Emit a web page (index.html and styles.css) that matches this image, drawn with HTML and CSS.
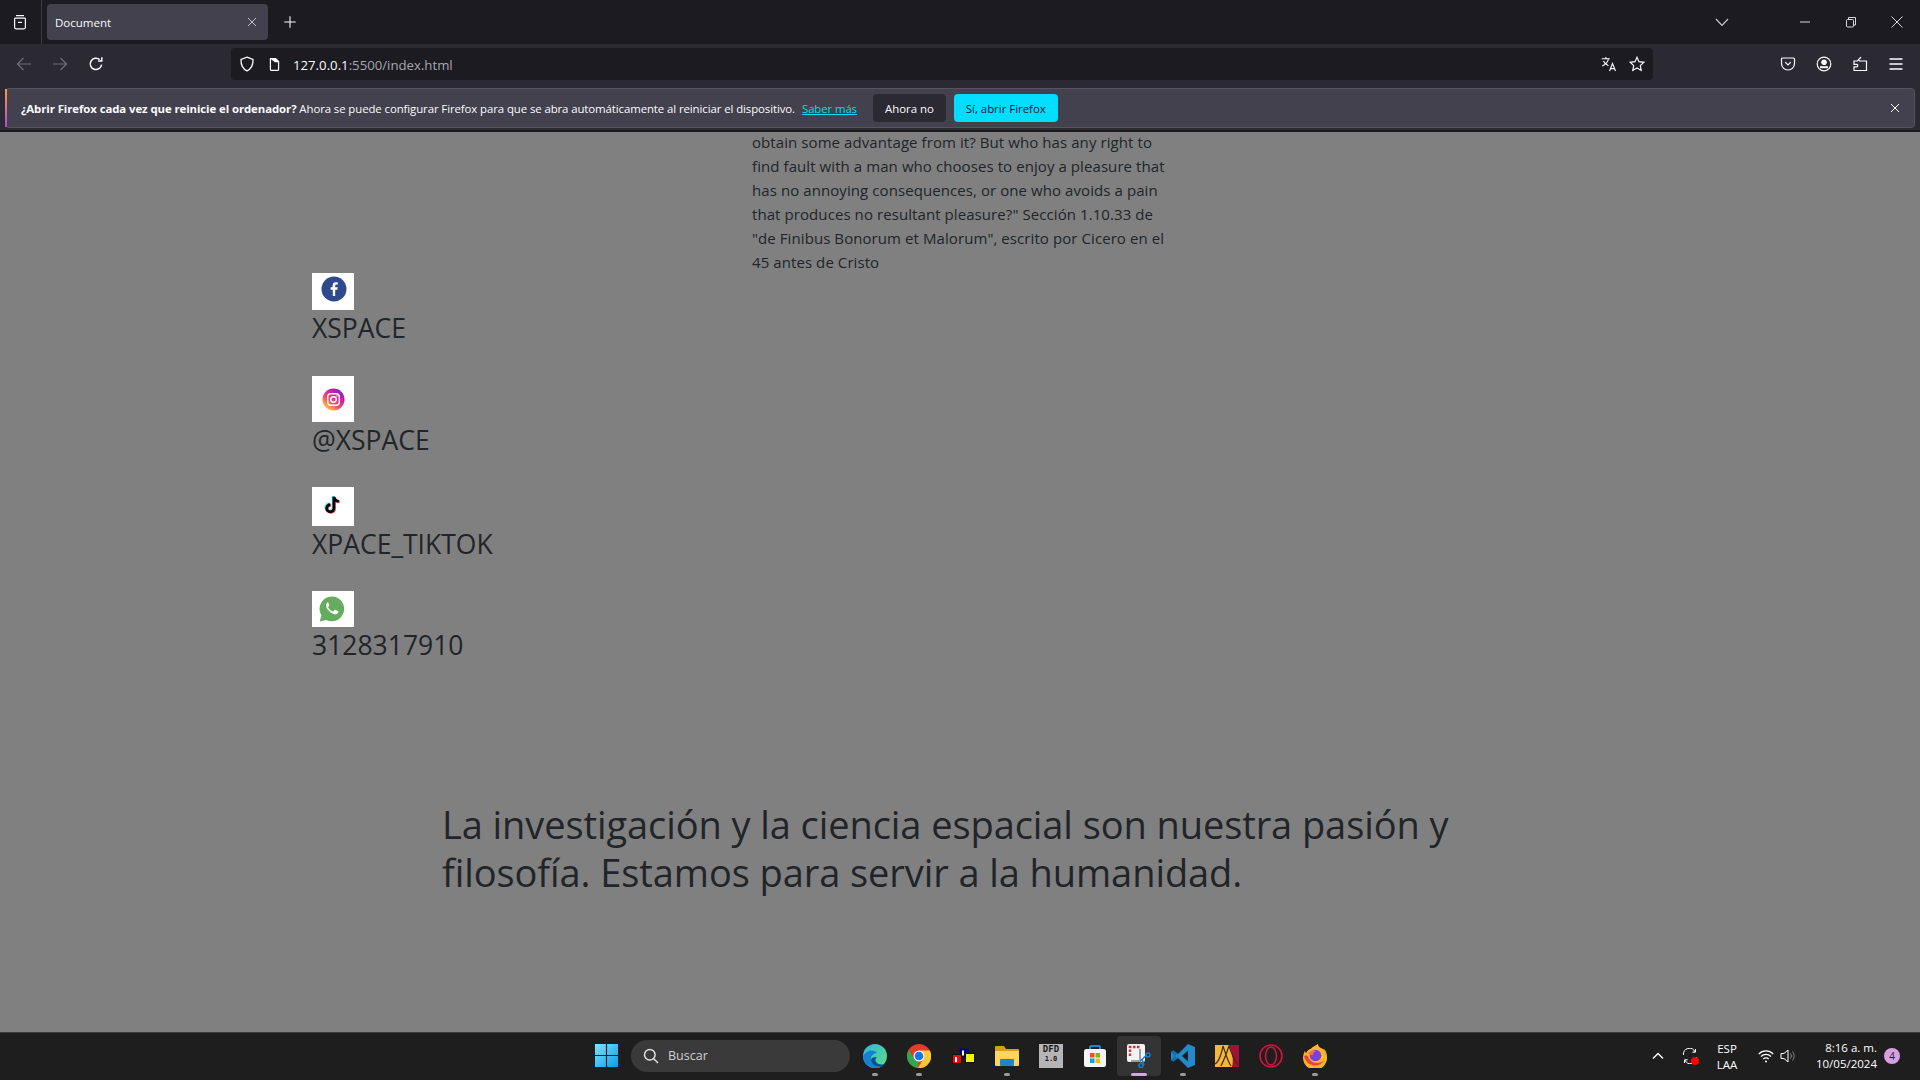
FILE: index.html
```html
<!DOCTYPE html>
<html lang="es">
<head>
  <meta charset="UTF-8">
  <title>Document</title>
  <link rel="stylesheet" href="styles.css">
</head>
<body>
  <div id="window">

    <!-- tabs -->
    <div class="tabstrip">
      <div class="side-btn">
        <svg class="ico" viewBox="0 0 16 16" fill="none" stroke="#fbfbfe" stroke-width="1.2"><path d="M4 1.6h8M2.6 4.2h10.8M2.6 4.2v9a1.6 1.6 0 0 0 1.6 1.6h7.6a1.6 1.6 0 0 0 1.6-1.6v-9"/><path d="M6 8.4h4"/></svg>
      </div>
      <div class="tab">
        <span class="tab-title">Document</span>
        <svg class="ico-s" viewBox="0 0 12 12" stroke="#c4c4c8" stroke-width="1"><path d="M2 2l8 8M10 2l-8 8"/></svg>
      </div>
      <svg class="ico new-tab" viewBox="0 0 16 16" stroke="#fbfbfe" stroke-width="1.2"><path d="M8 1.5v13M1.5 8h13"/></svg>
      <div class="tabstrip-right">
        <svg class="ico tab-list" viewBox="0 0 16 16" fill="none" stroke="#c9c9cd" stroke-width="1.2"><path d="M2 5l6 6.4L14 5"/></svg>
        <div class="win-btn"><svg class="ico-s" viewBox="0 0 12 12" stroke="#d8d8da" stroke-width="1"><path d="M1 6h10"/></svg></div>
        <div class="win-btn"><svg class="ico-s" viewBox="0 0 12 12" fill="none" stroke="#d8d8da" stroke-width="1"><rect x="1.5" y="3.5" width="7" height="7.5" rx="1"/><path d="M3.5 3.5V1.5h7v7.5H8.5"/></svg></div>
        <div class="win-btn"><svg class="ico-s" viewBox="0 0 12 12" stroke="#d8d8da" stroke-width="1"><path d="M.5.5l11 11M11.500.5l-11 11"/></svg></div>
      </div>
    </div>

    <!-- nav bar -->
    <div class="navbar">
      <svg class="ico nav-ico" viewBox="0 0 16 16" fill="none" stroke="#6f6f76" stroke-width="1.2"><path d="M15 8H1.500M7.500 2l-6 6 6 6"/></svg>
      <svg class="ico nav-ico" viewBox="0 0 16 16" fill="none" stroke="#6f6f76" stroke-width="1.2"><path d="M1 8h13.500M8.500 2l6 6-6 6"/></svg>
      <svg class="ico nav-ico" viewBox="0 0 16 16" fill="none" stroke="#fbfbfe" stroke-width="1.5"><path d="M13.600 8.600A5.700 5.700 0 1 1 11.700 3.600"/><path d="M13.800 1.300v3.700h-3.700"/></svg>
      <div class="urlbar">
        <svg class="ico url-shield" viewBox="0 0 16 16" fill="none" stroke="#fbfbfe" stroke-width="1.3"><path d="M8 1.200l6 2.200c.2 5.500-1.800 9.400-6 11.400-4.200-2-6.200-5.900-6-11.400z"/></svg>
        <svg class="ico url-page" viewBox="0 0 16 16" fill="#fbfbfe"><path d="M3 1h6.500L13 4.500V13a2 2 0 0 1-2 2H5a2 2 0 0 1-2-2zm1.300 1.300V13c0 .4.300.7.700.7h6c.4 0 .7-.3.700-.7V5.500H8.500z"/></svg>
        <span class="url-text"><span class="url-host">127.0.0.1</span>:5500/index.html</span>
        <div class="url-actions">
          <svg class="ico" viewBox="0 0 16 16" fill="none" stroke="#fbfbfe" stroke-width="1.1"><path d="M.8 2.800h8M4.800 1v1.800M7.400 2.800C7 6 4.500 8.500 1.200 10M2.500 5c.8 2 3 4 5 4.800"/><path d="M8.500 15L11.500 7.500l3 7.500M9.500 12.600h4"/></svg>
          <svg class="ico" viewBox="0 0 16 16" fill="none" stroke="#fbfbfe" stroke-width="1.2"><path d="M8 1.300l2 4.400 4.800.6-3.500 3.300.9 4.800L8 12l-4.200 2.400.9-4.800L1.200 6.300 6 5.700z"/></svg>
        </div>
      </div>
      <div class="nav-right">
        <svg class="ico" viewBox="0 0 16 16" fill="none" stroke="#fbfbfe" stroke-width="1.2"><path d="M2.500 2h11c.6 0 1 .4 1 1v4.500a6.500 6.500 0 0 1-13 0V3c0-.6.400-1 1-1z"/><path d="M5.200 6.200L8 9l2.800-2.800"/></svg>
        <svg class="ico" viewBox="0 0 16 16" fill="none" stroke="#fbfbfe" stroke-width="1.2"><circle cx="8" cy="8" r="6.800"/><circle cx="8" cy="6.300" r="2.200" fill="#fbfbfe"/><path d="M4 11.200h8" stroke-width="2"/></svg>
        <svg class="ico" viewBox="0 0 16 16" fill="none" stroke="#fbfbfe" stroke-width="1.2"><path d="M9 1.200L6.500 3.500l1 1.500H14.500v9.500H2v-3.700h3c1-.2 1-2.300 0-2.500H2V5h3.500L9 1.200z"/></svg>
        <svg class="ico" viewBox="0 0 16 16" stroke="#fbfbfe" stroke-width="1.3"><path d="M1.500 3h13M1.500 8h13M1.500 13h13"/></svg>
      </div>
    </div>

    <!-- infobar -->
    <div class="infobar">
      <p class="info-text"><b>¿Abrir Firefox cada vez que reinicie el ordenador?</b> Ahora se puede configurar Firefox para que se abra automáticamente al reiniciar el dispositivo.</p>
      <a class="info-link">Saber más</a>
      <button class="info-btn">Ahora no</button>
      <button class="info-btn primary">Sí, abrir Firefox</button>
      <svg class="ico-s info-close" viewBox="0 0 12 12" stroke="#fbfbfe" stroke-width="1"><path d="M2 2l8 8M10 2l-8 8"/></svg>
    </div>

    <!-- page -->
    <main class="page">
      <p class="lorem">obtain some advantage from it? But who has any right to find fault with a man who chooses to enjoy a pleasure that has no annoying consequences, or one who avoids a pain that produces no resultant pleasure?" Sección 1.10.33 de "de Finibus Bonorum et Malorum", escrito por Cicero en el 45 antes de Cristo</p>

      <section class="socials">
        <div class="social">
          <div class="social-box box-fb">
            <svg class="fb-ico" viewBox="0 0 26 26"><circle cx="13" cy="13" r="12.500" fill="#2f4a8c"/><path fill="#fff" d="M14.200 20v-6.300h2.100l.4-2.500h-2.500V9.800c0-.7.300-1.200 1.300-1.200h1.300V6.400c-.4 0-1.100-.1-1.900-.1-2 0-3.300 1.200-3.300 3.300v1.600H9.600v2.500h2.200V20z"/></svg>
          </div>
          <span class="social-name">XSPACE</span>
        </div>
        <div class="social">
          <div class="social-box box-ig">
            <svg class="ig-ico" viewBox="0 0 24 24">
              <defs><linearGradient id="iggrad" x1="0.150" y1="0.950" x2="0.850" y2="0.050"><stop offset="0" stop-color="#fdd835"/><stop offset="0.400" stop-color="#f0476a"/><stop offset="0.750" stop-color="#c41fae"/><stop offset="1" stop-color="#7a1fd0"/></linearGradient></defs>
              <circle cx="12" cy="12" r="11.500" fill="url(#iggrad)"/>
              <rect x="6" y="6" width="12" height="12" rx="3.200" fill="none" stroke="#fff" stroke-width="1.400"/>
              <circle cx="12" cy="12" r="2.900" fill="none" stroke="#fff" stroke-width="1.400"/>
              <circle cx="15.600" cy="8.400" r=".8" fill="#fff"/>
            </svg>
          </div>
          <span class="social-name">@XSPACE</span>
        </div>
        <div class="social">
          <div class="social-box box-tt">
            <svg class="tt-ico" viewBox="0 0 20 22">
              <path fill="none" stroke="#25f4ee" stroke-width="2.600" d="M10 3v11.500a3.600 3.600 0 1 1-3.600-3.600M10 3c.4 2.600 2 4.300 5 4.600"/>
              <path fill="none" stroke="#fe2c55" stroke-width="2.600" d="M11.600 4.300v11.500a3.600 3.600 0 1 1-3.600-3.600M11.600 4.300c.4 2.600 2 4.300 5 4.600"/>
              <path fill="none" stroke="#000" stroke-width="2.600" d="M10.800 3.700v11.500a3.600 3.600 0 1 1-3.600-3.600M10.800 3.700c.4 2.600 2 4.300 5 4.600"/>
            </svg>
          </div>
          <span class="social-name">XPACE_TIKTOK</span>
        </div>
        <div class="social">
          <div class="social-box box-wa">
            <svg class="wa-ico" viewBox="0 0 26 26"><path fill="#66ac5e" d="M13 .5a12.400 12.400 0 0 0-10.600 18.800L.8 25.500l6.400-1.500A12.400 12.400 0 1 0 13 .5z"/><path fill="#fff" d="M9.200 6.300c-.5 0-1.600.5-2 1.800-.5 1.800.4 4.300 2.600 6.700 2.400 2.500 5.300 4 7.300 3.500 1.400-.4 2.100-1.500 2.200-2.300.1-.5 0-.7-.4-.9l-2.500-1.200c-.4-.2-.7-.1-.9.200l-1 1.200c-.2.300-.5.300-.8.200-1.800-.7-3.600-2.300-4.500-4-.2-.3-.1-.5.1-.8l.8-1c.2-.3.200-.5.100-.8l-1-2.500c-.2-.3-.3-.4-.7-.4z"/></svg>
          </div>
          <span class="social-name">3128317910</span>
        </div>
      </section>

      <h2 class="mission">La investigación y la ciencia espacial son nuestra pasión y filosofía. Estamos para servir a la humanidad.</h2>
    </main>

    <!-- taskbar -->
    <footer class="taskbar">
      <svg class="tb-win" viewBox="0 0 24 24"><defs><linearGradient id="wingrad" x1="0" y1="0" x2="1" y2="1"><stop offset="0" stop-color="#7fe3ff"/><stop offset="1" stop-color="#0a9be8"/></linearGradient></defs><path fill="url(#wingrad)" d="M0 0h11.400v11.400H0zM12.600 0H24v11.400H12.600zM0 12.600h11.400V24H0zM12.600 12.600H24V24H12.600z"/></svg>
      <div class="tb-search">
        <svg class="ico" viewBox="0 0 16 16" fill="none" stroke="#e2e2e2" stroke-width="1.500"><circle cx="6.800" cy="6.800" r="5.300"/><path d="M10.800 10.800L15 15"/></svg>
        <span>Buscar</span>
      </div>
      <div class="tb-apps">
        <div class="tb-app">
          <svg class="tb-ico" viewBox="0 0 24 24"><defs><linearGradient id="edgegrad" x1="0" y1="0" x2="1" y2="1"><stop offset="0" stop-color="#2fb5e0"/><stop offset="1" stop-color="#5fe07a"/></linearGradient></defs><circle cx="12" cy="12" r="12" fill="url(#edgegrad)"/><path fill="#1481d2" d="M0 12C0 18 5 24 13 24c2 0 4-.5 6-1.500-5 1-10-1-11-6-1-4 2-7 6-7.500-3-3-7-3-10-1C2 9.500 .5 10.500 0 12z"/><path fill="#0b4f96" d="M8 16.500c1 5 6 7 11 6 1-.5 2-1.500 3-2.500-3 1-7 .5-9-2-1-1.500-.5-4 1-5-3 0-6 .5-6 3.500z"/></svg>
          <i class="dot"></i>
        </div>
        <div class="tb-app">
          <svg class="tb-ico" viewBox="0 0 24 24"><circle cx="12" cy="12" r="12" fill="#e33b2e"/><path fill="#fcc934" d="M12 6.500h10.800A12 12 0 0 1 11 24l5.500-9.500z"/><path fill="#2da94f" d="M1.600 6l5.600 9.200 4 .3L11 24A12 12 0 0 1 1.600 6z"/><circle cx="12" cy="12" r="5.500" fill="#fff"/><circle cx="12" cy="12" r="4.300" fill="#1a73e8"/></svg>
          <i class="dot"></i>
        </div>
        <div class="tb-app">
          <svg class="tb-ico" viewBox="0 0 24 24"><rect x="8.500" y="4.500" width="9" height="9" fill="#00008b"/><rect x="1.500" y="10.500" width="9" height="9" fill="#e01010" stroke="#111"/><rect x="14.500" y="9.500" width="9" height="9" fill="#f5f500" stroke="#111"/><rect x="4" y="13" width="2" height="5" fill="#fff"/><rect x="11" y="6.500" width="2" height="5" fill="#fff"/></svg>
        </div>
        <div class="tb-app">
          <svg class="tb-ico" viewBox="0 0 24 24"><path fill="#d89f12" d="M0 3a1 1 0 0 1 1-1h8l2 3h12a1 1 0 0 1 1 1v3H0z"/><path fill="#fcd462" d="M0 7h24v14a1 1 0 0 1-1 1H1a1 1 0 0 1-1-1z"/><rect x="5" y="15" width="14" height="7" rx="1" fill="#1c86d1"/></svg>
          <i class="dot"></i>
        </div>
        <div class="tb-app">
          <div class="dfd-ico"><span>DFD</span><small>1.0</small></div>
        </div>
        <div class="tb-app">
          <svg class="tb-ico" viewBox="0 0 24 24"><path fill="none" stroke="#28a8ea" stroke-width="1.500" d="M7 6V3a1 1 0 0 1 1-1h8a1 1 0 0 1 1 1v3"/><rect x="1" y="5" width="22" height="18" rx="2.500" fill="#f5f5f5"/><rect x="7" y="9" width="4.500" height="4.500" fill="#f25022"/><rect x="12.500" y="9" width="4.500" height="4.500" fill="#7fba00"/><rect x="7" y="14.500" width="4.500" height="4.500" fill="#00a4ef"/><rect x="12.500" y="14.500" width="4.500" height="4.500" fill="#ffb900"/></svg>
        </div>
        <div class="tb-app is-active">
          <svg class="tb-ico" viewBox="0 0 24 24"><rect x="0" y="0" width="18" height="18" rx="2" fill="#f3f3f3"/><path fill="none" stroke="#d13438" stroke-width="2.500" stroke-dasharray="2.500 1.500" d="M3 12V3h10"/><path fill="#9aa0a6" d="M12 5h2v11h-2zM4 16h10v2H4z"/><path fill="none" stroke="#1b7fc9" stroke-width="1.500" d="M13.500 17l6-6M15 15l2 6"/><circle cx="21" cy="11" r="2" fill="none" stroke="#1b7fc9" stroke-width="1.500"/><circle cx="14" cy="21.500" r="2" fill="none" stroke="#1b7fc9" stroke-width="1.500"/></svg>
          <i class="dash"></i>
        </div>
        <div class="tb-app">
          <svg class="tb-ico" viewBox="0 0 24 24"><path fill="#2489ca" d="M17 0l7 3v18l-7 3L7 14l-4.500 3.500L0 16V8l2.500-1.500L7 10zM17 6.500L11 12l6 5.500z"/><path fill="#1070b3" d="M0 8l2.500-1.500L7 10l-3.500 2L7 14l-4.500 3.500L0 16l3.500-4z"/></svg>
          <i class="dot"></i>
        </div>
        <div class="tb-app">
          <svg class="tb-ico" viewBox="0 0 24 24"><rect x="0" y="1" width="24" height="22" fill="#f4b73b"/><path fill="#a50f36" d="M14 1h10v22H17c2-7 0-16-3-22z"/><path fill="none" stroke="#3c2a16" stroke-width="1.200" d="M0 20C4 18 7 8 8 2c2 6 5 16 8 20M6 22C9 16 12 8 14 2c2 6 5 14 9 19"/></svg>
        </div>
        <div class="tb-app">
          <svg class="tb-ico" viewBox="0 0 24 24" fill="none" stroke="#d6133f" stroke-width="1.600"><circle cx="12" cy="12" r="11"/><ellipse cx="12" cy="12" rx="5.500" ry="9"/></svg>
        </div>
        <div class="tb-app">
          <svg class="tb-ico" viewBox="0 0 24 24"><path fill="#ffb52b" d="M22 6c1 2 2 4 2 7a12 12 0 1 1-23-4c.3-1 .6-1.800 1-2.300 0 1 .5 2 1 2.500C4 7 6 5 8 4.800 9 3 12 2 15 0c0 2 1 3 3 4 2 1 3 1.500 4 2z"/><path fill="#f0443a" d="M1 12a11 11 0 0 0 21 3c-2 3-5 4-8 4-5 0-8-3-9-7-1-1-2-1-4 0z"/><circle cx="12.500" cy="11.500" r="5.800" fill="#7542e5"/><path fill="#ff7139" d="M5 9c2-2 5-3 8-2-2 .5-3 2-3 4-2 0-4 0-5-2z"/></svg>
          <i class="dot"></i>
        </div>
      </div>

      <div class="tray">
        <svg class="ico-s tray-up" viewBox="0 0 12 12" fill="none" stroke="#fff" stroke-width="1.400"><path d="M1 8.500L6 3.500l5 5"/></svg>
        <div class="tray-sync">
          <svg class="ico" viewBox="0 0 16 16" fill="none" stroke="#fff" stroke-width="1"><path d="M1.500 7A6 6 0 0 1 13 4M13.500 1v3.200h-3.200M14.500 9A6 6 0 0 1 3 12M2.500 15v-3.200h3.200"/></svg>
          <i class="sync-dot"></i>
        </div>
        <div class="tray-lang">ESP<br>LAA</div>
        <svg class="ico wifi" viewBox="0 0 16 16" fill="none" stroke="#fff" stroke-width="1.200"><path d="M.8 6a10 10 0 0 1 14.400 0M3 8.500a7 7 0 0 1 10 0M5.300 11a3.800 3.800 0 0 1 5.400 0"/><circle cx="8" cy="13.500" r="1" fill="#fff" stroke="none"/></svg>
        <svg class="ico vol" viewBox="0 0 16 16" fill="none" stroke="#fff" stroke-width="1"><path d="M1 5.500h3L8 2v12l-4-3.500H1z"/><path d="M10.500 5.500a4 4 0 0 1 0 5M12.500 3.500a7 7 0 0 1 0 9" stroke="#8a8a8a"/></svg>
        <div class="tray-clock">8:16 a. m.<br>10/05/2024</div>
        <div class="tray-badge">4</div>
      </div>
    </footer>
  </div>
</body>
</html>
```

FILE: styles.css
```css
* {
  box-sizing: border-box;
}

html, body {
  height: 100%;
  margin: 0;
  background: #808080;
  font-family: "Open Sans", "Noto Sans", sans-serif;
  overflow: hidden;
}

#window {
  height: 1080px;
  display: flex;
  flex-direction: column;
}

.ico {
  width: 16px;
  height: 16px;
  flex: none;
}

.ico-s {
  width: 12px;
  height: 12px;
  flex: none;
}

/* tabs */
.tabstrip {
  height: 44px;
  background: #1c1b22;
  display: flex;
  align-items: center;
  flex: none;
}

.side-btn {
  width: 42px;
  height: 44px;
  padding-left: 12px;
  display: flex;
  align-items: center;
  border-right: 1px solid #3a3944;
  margin-right: 5px;
}

.tab {
  width: 221px;
  height: 36px;
  background: #42414d;
  border-radius: 4px;
  display: flex;
  align-items: center;
  justify-content: space-between;
  padding: 0 10px 0 8px;
  color: #fbfbfe;
}

.tab-title {
  font-size: 11.5px;
}

.new-tab {
  margin-left: 15px;
  width: 14px;
  height: 14px;
}

.tabstrip-right {
  margin-left: auto;
  display: flex;
  align-items: center;
}

.tab-list {
  margin-right: 52px;
}

.win-btn {
  width: 46px;
  display: flex;
  justify-content: center;
}

/* nav bar */
.navbar {
  height: 44px;
  background: #2b2a33;
  display: flex;
  align-items: center;
  padding: 0 0 4px 16px;
  flex: none;
}

.nav-ico {
  margin-right: 20px;
}

.nav-ico:nth-child(3) {
  margin-right: 0;
}

.urlbar {
  width: 1422px;
  height: 32px;
  margin-left: 127px;
  background: #1c1b22;
  border-radius: 4px;
  display: flex;
  align-items: center;
  padding: 0 8px;
  font-size: 13.2px;
  color: #a6a6ad;
}

.url-page {
  margin-left: 12px;
  width: 15px;
  height: 15px;
}

.url-text {
  margin-left: 11px;
  padding-top: 1px;
}

.url-host {
  color: #fbfbfe;
}

.url-actions {
  margin-left: auto;
  display: flex;
  gap: 12px;
}

.nav-right {
  margin-left: 127px;
  display: flex;
  gap: 20px;
}

/* infobar */
.infobar {
  height: 44px;
  flex: none;
  background: #2b2a33;
  border-bottom: 2px solid #1c1b22;
  padding: 0 5px 2px;
  display: flex;
  align-items: center;
  color: #fbfbfe;
  font-size: 11.4px;
  position: relative;
}

.infobar::before {
  content: "";
  position: absolute;
  left: 5px;
  right: 5px;
  top: 0;
  bottom: 2px;
  background: #42414d;
  border: 1px solid #55545f;
  border-radius: 4px;
}

.infobar::after {
  content: "";
  position: absolute;
  left: 5px;
  top: 1px;
  bottom: 3px;
  width: 2px;
  background: linear-gradient(#ff9a3c, #b049e0);
}

.info-text,
.info-link,
.info-btn,
.info-close {
  position: relative;
  z-index: 1;
}

.info-text {
  margin: 0 0 0 16px;
  letter-spacing: -0.085px;
}

.info-link {
  margin-left: 7px;
  color: #00ddff;
  text-decoration: underline;
  letter-spacing: -0.1px;
}

.info-btn {
  height: 28px;
  margin-left: 16px;
  padding: 0 12px;
  border: none;
  border-radius: 4px;
  background: #2b2a33;
  color: #fbfbfe;
  font: inherit;
}

.info-btn.primary {
  margin-left: 8px;
  background: #00ddff;
  color: #15141a;
}

.info-close {
  margin-left: auto;
  margin-right: 14px;
}

/* page */
.page {
  flex: 1;
  min-height: 0;
  overflow: hidden;
  background: #808080;
  color: #212529;
}

.lorem {
  width: 420px;
  margin: -2px 0 0 752px;
  font-size: 15px;
  line-height: 24px;
  letter-spacing: 0.08px;
}

.socials {
  margin: -1px 0 0 312px;
  display: flex;
  flex-direction: column;
  gap: 29px;
}

.social {
  display: flex;
  flex-direction: column;
  align-items: flex-start;
}

.social:first-child {
  margin-bottom: 1px;
}

.social-box {
  width: 42px;
  background: #fff;
  display: flex;
}

.box-fb { height: 37px; padding: 3px 0 0 9px; }
.box-ig { height: 46px; padding: 12px 0 0 10px; }
.box-tt { height: 39px; padding: 6px 0 0 11px; }
.box-wa { height: 36px; padding: 5px 0 0 7px; }

.fb-ico { width: 26px; height: 26px; }
.ig-ico { width: 23px; height: 23px; }
.tt-ico { width: 20px; height: 22px; }
.wa-ico { width: 26px; height: 26px; }

.social-name {
  font-size: 26.5px;
  line-height: 36px;
}

.mission {
  width: 1100px;
  margin: 137px 0 0 442px;
  font-size: 38px;
  line-height: 48px;
  font-weight: 400;
  letter-spacing: -0.08px;
}

/* taskbar */
.taskbar {
  height: 48px;
  flex: none;
  background: #1e1e1e;
  border-top: 1px solid #3c3c3c;
  display: flex;
  align-items: center;
  color: #fff;
  padding: 0 0 2px 595px;
}

.tb-win {
  width: 23px;
  height: 23px;
  flex: none;
}

.tb-search {
  width: 219px;
  height: 32px;
  margin-left: 13px;
  border-radius: 16px;
  background: #3a3a3a;
  display: flex;
  align-items: center;
  gap: 9px;
  padding-left: 12px;
  font-size: 12.5px;
  color: #d0d0d0;
}

.tb-apps {
  margin-left: 3px;
  display: flex;
}

.tb-app {
  width: 44px;
  height: 40px;
  border-radius: 4px;
  display: flex;
  align-items: center;
  justify-content: center;
  position: relative;
}

.tb-ico {
  width: 24px;
  height: 24px;
}

.tb-app .dot,
.tb-app .dash {
  position: absolute;
  bottom: 0;
  left: 50%;
  transform: translateX(-50%);
  height: 3px;
  border-radius: 2px;
}

.tb-app .dot {
  width: 6px;
  background: #9a9a9a;
}

.tb-app .dash {
  width: 16px;
  background: #d9a3e6;
}

.tb-app.is-active {
  background: #333;
}

.dfd-ico {
  width: 24px;
  height: 24px;
  background: #b5b5b5;
  display: flex;
  flex-direction: column;
  align-items: center;
  color: #1a1a1a;
  font-family: "DejaVu Sans Mono", monospace;
  font-size: 9px;
  line-height: 11px;
  font-weight: 700;
}

.dfd-ico small {
  font-size: 7px;
  line-height: 9px;
}

.tray {
  margin-left: auto;
  display: flex;
  align-items: center;
  font-size: 11.5px;
}

.tray-up {
  margin-right: 18px;
}

.tray-sync {
  position: relative;
  display: flex;
}

.sync-dot {
  position: absolute;
  right: -1px;
  bottom: -1px;
  width: 8px;
  height: 8px;
  border-radius: 50%;
  background: #f00;
}

.tray-lang {
  margin: 2px 0 0 17px;
  width: 24px;
  text-align: center;
  line-height: 16px;
}

.wifi {
  margin-left: 19px;
}

.vol {
  margin-left: 6px;
}

.tray-clock {
  margin-left: 14px;
  width: 67px;
  text-align: right;
  line-height: 16px;
}

.tray-badge {
  width: 16px;
  height: 16px;
  margin: 0 20px 0 7px;
  border-radius: 50%;
  background: #d8a0e4;
  color: #222;
  font-size: 10px;
  line-height: 16px;
  text-align: center;
}
```
